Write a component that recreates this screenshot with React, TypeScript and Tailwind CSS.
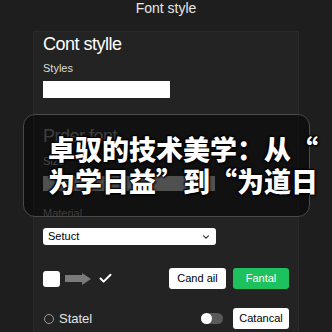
import { ChevronDown, Check } from "lucide-react"

export default function App() {
  return (
    <div className="relative w-[332px] h-[332px] overflow-hidden bg-[#1e1e1e] text-white font-['Liberation_Sans',Arial,sans-serif]">
      <div className="h-[31px] flex justify-center text-[14px] leading-[16px] text-[#e8e8e8]">Font style</div>

      {/* Panel */}
      <div className="mx-[33px] h-[301px] bg-[#232323] border border-[#2a2a2a] border-b-0 px-[9px]">
        <div className="text-[18px] leading-[24px] tracking-[-0.5px] text-white">Cont stylle</div>
        <div className="mt-[6px] text-[11px] leading-[13px] text-[#dcdcdc]">Styles</div>
        <div className="mt-[6px] w-[127px] h-[17px] bg-white" />

        <div className="mt-[26px] text-[18px] leading-[24px] tracking-[-0.5px] text-[#7c7c7c]">Prder font</div>
        <div className="mt-[7px] text-[11px] leading-[13px] text-[#8a8a8a]">Size</div>
        <div className="mt-[8px] w-[172px] h-[15px] bg-[#a0a0a0]" />
        <div className="mt-[16px] text-[11px] leading-[13px] text-[#7a7a7a]">Material</div>

        <div className="mt-[8px] w-[173px] h-[17px] bg-white rounded-[3px] flex items-center justify-between px-[5px] text-black">
          <span className="text-[11px]">Setuct</span>
          <ChevronDown className="w-[10px] h-[10px]" strokeWidth={2.5} />
        </div>

        <div className="mt-[23px] h-[21px] flex items-center">
          <div className="w-[17px] h-[16px] bg-white rounded-[3px]" />
          <div className="ml-[5px] flex items-center">
            <div className="w-[17px] h-[7px] bg-[#7a7a7a]" />
            <div className="w-0 h-0 border-y-[6px] border-y-transparent border-l-[9px] border-l-[#7a7a7a]" />
          </div>
          <Check className="ml-[7px] w-[15px] h-[15px] text-white" strokeWidth={3.2} />
          <div className="ml-auto flex gap-[7px]">
            <div className="w-[57px] h-[21px] bg-white rounded-[3px] flex items-center justify-center text-[11px] text-black">Cand ail</div>
            <div className="w-[56px] h-[21px] bg-[#1dc25e] rounded-[3px] flex items-center justify-center text-[11px] text-white">Fantal</div>
          </div>
        </div>

        <div className="mt-[19px] h-[21px] flex items-center">
          <div className="ml-[1px] w-[10px] h-[10px] rounded-full border-[1.5px] border-[#9a9a9a]" />
          <span className="ml-[5px] text-[13px] text-[#e5e5e5]">Statel</span>
          <div className="ml-auto mr-[10px] w-[22px] h-[11px] rounded-full bg-[#5a5a5a] flex items-center">
            <div className="w-[11px] h-[11px] rounded-full bg-white" />
          </div>
          <div className="w-[56px] h-[21px] bg-white rounded-[3px] flex items-center justify-center text-[11px] text-black">Catancal</div>
        </div>
      </div>

      {/* Overlay */}
      <div className="absolute left-[23px] top-[114px] w-[287px] h-[103px] rounded-[12px] border border-[#4a4a4a] bg-black/50" />
      <div className="absolute left-[48px] top-[133px] font-['Noto_Sans_CJK_SC',sans-serif] font-black text-[27px] leading-[32px] text-white whitespace-nowrap [text-shadow:0_0_2px_#000,0_0_3px_#000,1px_1px_2px_#000,-1px_-1px_1px_#000]">
        <div>卓驭的技术美学：从“</div>
        <div>为学日益”到“为道日</div>
      </div>
    </div>
  )
}
